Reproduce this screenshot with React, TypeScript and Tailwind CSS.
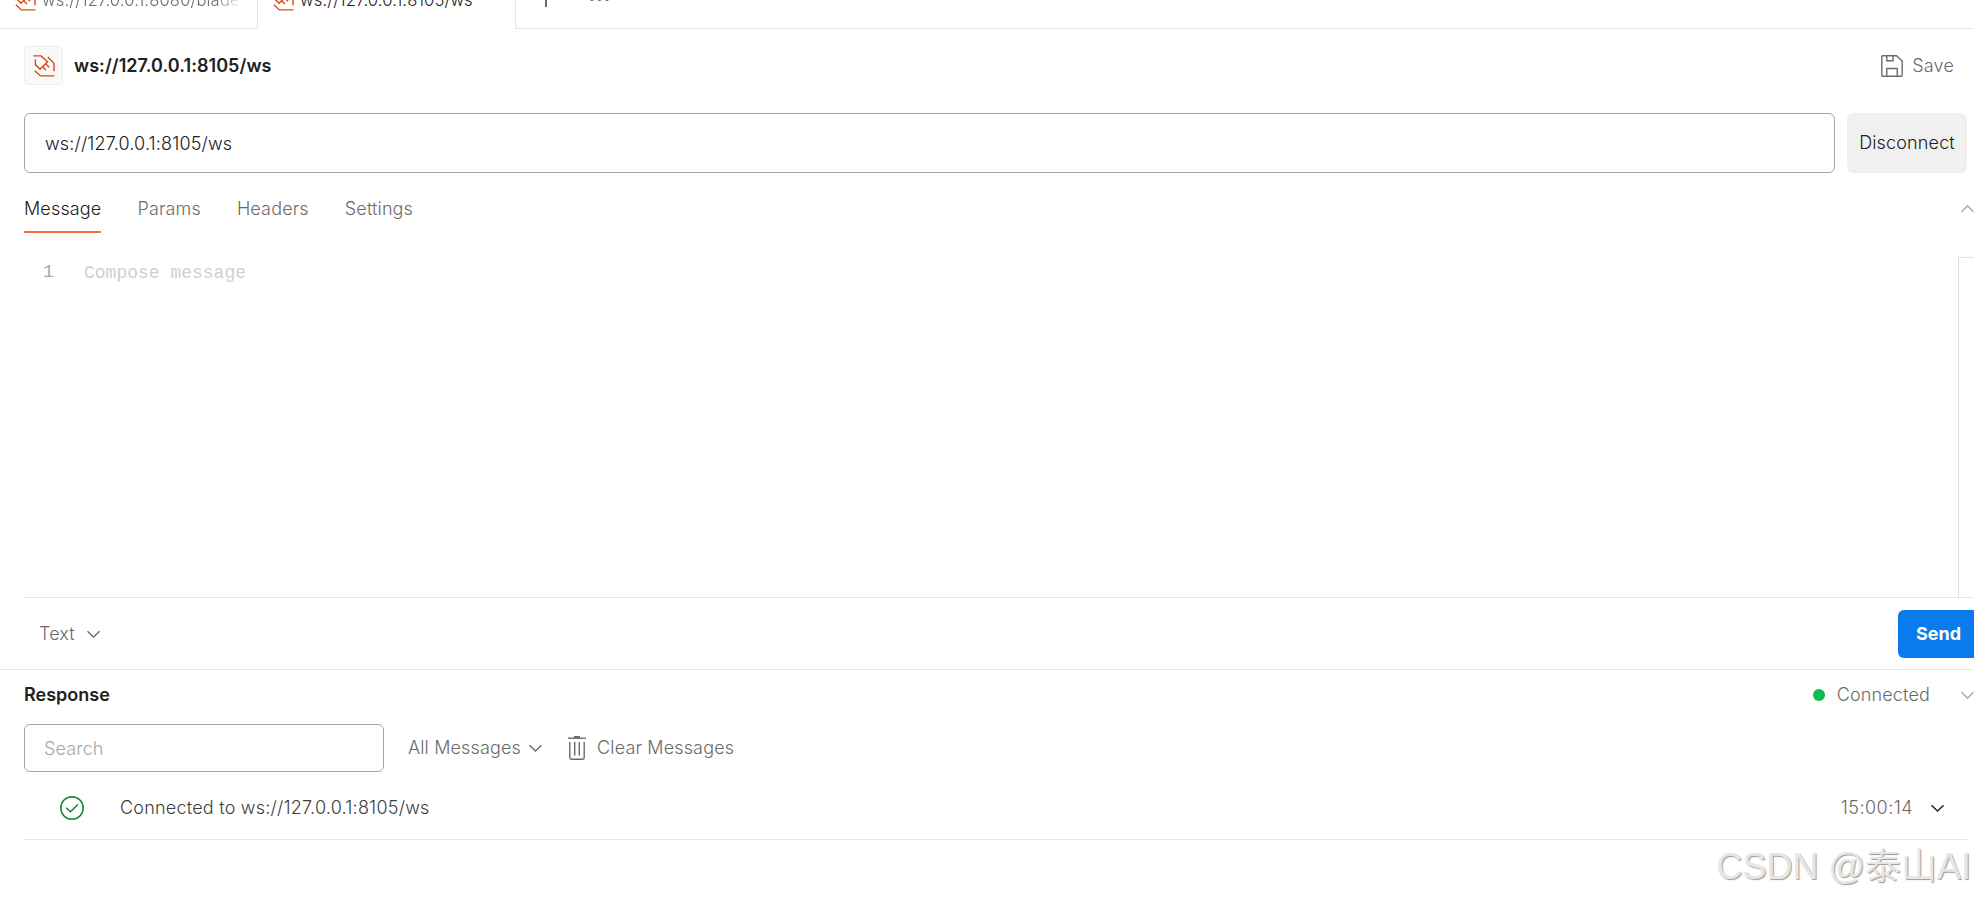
import clsx from "clsx";

const SocketIcon = ({ className }: { className?: string }) => (
  <svg
    viewBox="0 0 22 22"
    fill="none"
    stroke="#d9480f"
    strokeWidth="1.4"
    className={clsx("w-[22px] h-[22px] shrink-0", className)}
  >
    <path d="M0.4 0.9H8L14.6 6.8L7 14.2L2.4 9.6V4.6" />
    <path d="M9.4 11.6L12.9 15.1M12.5 8.8L16.2 12.3" />
    <path d="M14.8 2L21 8.3V16.2" />
    <path d="M1.8 15.8L7.4 20.9H21.5" />
  </svg>
);

const Chevron = ({ up, className }: { up?: boolean; className?: string }) => (
  <svg
    viewBox="0 0 13 8"
    fill="none"
    stroke="currentColor"
    strokeWidth="1.4"
    className={clsx("w-[13px] h-2 shrink-0", className)}
  >
    <path d={up ? "M0.5 6.8L6.5 1L12.5 6.8" : "M0.5 1.2L6.5 7L12.5 1.2"} />
  </svg>
);

const SaveIcon = () => (
  <svg
    viewBox="0 0 22 22"
    fill="none"
    stroke="currentColor"
    strokeWidth="1.4"
    className="w-[22px] h-[22px]"
  >
    <path d="M1.8 0.8H15.5L21.2 6V20.2Q21.2 21.2 20.2 21.2H1.8Q0.8 21.2 0.8 20.2V1.8Q0.8 0.8 1.8 0.8Z" />
    <path d="M5.8 1V5.8H12V1M5.8 21V13.5H16.2V21" />
  </svg>
);

const TrashIcon = () => (
  <svg
    viewBox="0 0 18 24"
    fill="none"
    stroke="currentColor"
    strokeWidth="1.4"
    className="w-[18px] h-6"
  >
    <path d="M0 2.2H18" />
    <path d="M6 1H12" strokeWidth="2" />
    <path d="M1.8 6V21.5Q1.8 23.2 3.5 23.2H14.5Q16.2 23.2 16.2 21.5V6" />
    <path d="M6.7 6V19.5M11.3 6V19.5" />
  </svg>
);

const CheckIcon = () => (
  <svg
    viewBox="0 0 24 24"
    fill="none"
    stroke="#0a8537"
    strokeWidth="1.5"
    className="w-6 h-6"
  >
    <circle cx="12" cy="12" r="11.2" />
    <path d="M6.2 11.8L10.5 15.8L17.8 8.5" />
  </svg>
);

const TabBar = () => (
  <div className="flex h-[29px] shrink-0 overflow-hidden text-[16.6px]">
    <div className="w-[258px] h-full border-r border-b border-[#e6e6e6] pl-3.5 flex items-start">
      <SocketIcon className="-mt-[11px]" />
      <span className="ml-1.5 -mt-3.5 w-[201px] leading-7 whitespace-nowrap overflow-hidden text-[#6b6b6b] [mask-image:linear-gradient(to_right,black_86%,transparent_99%)]">
        ws://127.0.0.1:8080/blade-ws
      </span>
    </div>
    <div className="w-[257px] h-full pl-3.5 flex items-start">
      <SocketIcon className="-mt-[11px]" />
      <span className="ml-1.5 -mt-3.5 leading-7">
        ws://127.0.0.1:8105/ws
      </span>
    </div>
    <div className="flex-1 h-full border-l border-b border-[#e6e6e6] pl-[22px] flex items-start text-[#6b6b6b]">
      <svg
        viewBox="0 0 16 16"
        stroke="currentColor"
        strokeWidth="2"
        className="w-4 h-4 -mt-[9px]"
      >
        <path d="M8 0V16M0 8H16" />
      </svg>
      <svg
        viewBox="0 0 21 4"
        fill="currentColor"
        className="w-[21px] h-1 ml-[35px] -mt-[3px]"
      >
        <circle cx="3" cy="2" r="2" />
        <circle cx="10.5" cy="2" r="2" />
        <circle cx="18" cy="2" r="2" />
      </svg>
    </div>
  </div>
);

const Header = () => (
  <div className="flex items-center h-[84px] shrink-0 pl-6 pr-5 pb-[11px]">
    <div className="w-[39px] h-[39px] rounded border border-[#ededed] bg-[#f9f9f9] flex items-center justify-center">
      <SocketIcon />
    </div>
    <h1 className="ml-[11px] font-semibold tracking-[0.06px]">
      ws://127.0.0.1:8105/ws
    </h1>
    <button className="ml-auto flex items-center gap-[9px] text-[#6b6b6b]">
      <SaveIcon />
      Save
    </button>
  </div>
);

const tabs = ["Message", "Params", "Headers", "Settings"];

const App = () => {
  return (
    <div className="w-full h-[900px] bg-white overflow-hidden relative flex flex-col font-['Inter',sans-serif] font-[350] tracking-[0.15px] text-[18px] leading-6 text-[#212121]">
      <TabBar />
      <Header />

      <div className="flex gap-3 pl-6 pr-[7px] h-[60px] shrink-0">
        <div className="flex-1 border border-[#a6a6a6] rounded-md flex items-center pl-5 pt-0.5">
          ws://127.0.0.1:8105/ws
        </div>
        <button className="w-[120px] rounded-md bg-[#f0f0f0]">
          Disconnect
        </button>
      </div>

      <div className="flex h-[60px] shrink-0 pl-6 gap-9 items-start">
        {tabs.map((tab, i) => (
          <div
            key={tab}
            className={clsx(
              "h-full pt-6 border-b-2",
              i === 0 ? "border-[#ff6c37]" : "border-transparent text-[#6b6b6b]"
            )}
          >
            {tab}
          </div>
        ))}
        <Chevron up className="ml-auto mt-8 text-[#a6a6a6]" />
      </div>

      <div className="ml-6 mt-6 h-[341px] shrink-0 flex border-b border-[#e6e6e6]">
        <div className="flex-1 flex pt-[3px] tracking-normal font-['Liberation_Mono',monospace]">
          <span className="w-[60px] pl-[19px] text-[#a6a6a6]">1</span>
          <span className="pt-px text-[#cfcfcf]">Compose message</span>
        </div>
        <div className="w-4 border-l border-t border-[#e0e0e0]" />
      </div>

      <div className="h-[72px] shrink-0 flex items-center pl-[39px] border-b border-[#e6e6e6] text-[#6b6b6b]">
        Text
        <Chevron className="ml-3" />
        <button className="ml-auto w-[76px] h-12 rounded-l-md bg-[#097bed] text-white font-bold tracking-normal text-left pl-[18px]">
          Send
        </button>
      </div>

      <div className="h-[54px] shrink-0 flex items-start pt-[13px] pl-6">
        <h2 className="font-semibold tracking-normal">Response</h2>
        <div className="ml-auto flex items-center text-[#6b6b6b]">
          <span className="w-3 h-3 rounded-full bg-[#0cbb52] mr-3" />
          Connected
          <Chevron className="ml-[31px] text-[#a6a6a6]" />
        </div>
      </div>

      <div className="h-12 shrink-0 flex items-center pl-6 text-[#6b6b6b]">
        <div className="w-[360px] h-12 border border-[#a6a6a6] rounded-md flex items-center pl-[19px] pt-0.5 text-[#a6a6a6]">
          Search
        </div>
        <button className="ml-6 flex items-center gap-2">
          All Messages
          <Chevron />
        </button>
        <button className="ml-[26px] flex items-center gap-[11px]">
          <TrashIcon />
          Clear Messages
        </button>
      </div>

      <div className="ml-6 mr-[7px] h-[68px] shrink-0 flex items-center pl-9 pr-[23px] pt-1 border-b border-[#e6e6e6]">
        <CheckIcon />
        <span className="ml-9 tracking-[0.22px] text-[#3d3d3d]">
          Connected to ws://127.0.0.1:8105/ws
        </span>
        <span className="ml-auto tracking-[0.45px] text-[#6b6b6b]">
          15:00:14
        </span>
        <Chevron className="ml-[18px]" />
      </div>

      <div className="absolute right-[3px] top-[843px] h-12 leading-[48px] text-[36px] tracking-normal whitespace-nowrap text-[#e6e6e6] font-['Liberation_Sans','Noto_Sans_CJK_SC',sans-serif] [text-shadow:1px_1px_1px_#999]">
        CSDN @泰山AI
      </div>
    </div>
  );
};

export default App;
